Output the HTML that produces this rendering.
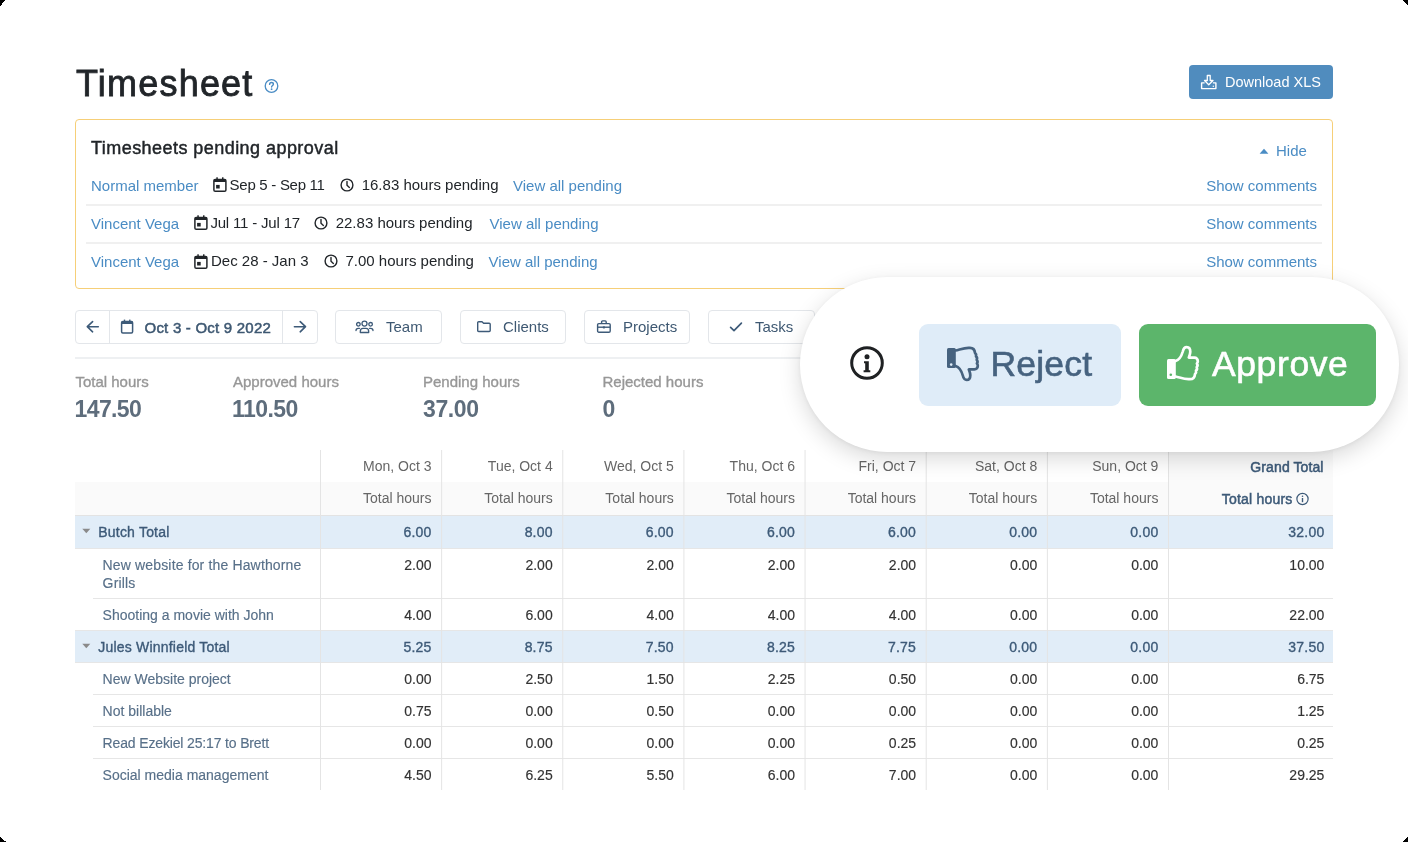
<!DOCTYPE html>
<html><head><meta charset="utf-8">
<style>
*{box-sizing:border-box;margin:0;padding:0}
html,body{width:1408px;height:842px;overflow:hidden;background:#000}
body{font-family:"Liberation Sans",sans-serif;position:relative}
#page{position:absolute;left:0;top:0;width:1408px;height:842px;background:#fff;overflow:hidden;will-change:transform}
.a{position:absolute;white-space:nowrap}
svg.a{overflow:visible}
</style></head><body>
<div id="page">
<div class="a" style="left:76px;top:65.93px;font-size:36px;line-height:36px;color:#212529;letter-spacing:1.2px;-webkit-text-stroke:0.8px #212529;">Timesheet</div>
<svg class="a" style="left:264px;top:78px" width="15" height="16" viewBox="0 0 15 16"><circle cx="7.5" cy="8" r="6.3" fill="none" stroke="#4a8cc4" stroke-width="1.3"/><path d="M5.6 6.4 C5.6 5.2 6.5 4.5 7.5 4.5 C8.6 4.5 9.4 5.2 9.4 6.2 C9.4 7.5 7.6 7.6 7.6 9" fill="none" stroke="#4a8cc4" stroke-width="1.4" stroke-linecap="round"/><circle cx="7.6" cy="11.2" r="0.9" fill="#4a8cc4"/></svg>
<div class="a" style="left:1189px;top:65px;width:144px;height:34px;background:#508cbe;border-radius:4px"></div>
<svg class="a" style="left:1200px;top:74px" width="18" height="16" viewBox="0 0 18 16"><path d="M7.3 1.5 H10.2 V6.5 H13 L8.75 10.8 L4.5 6.5 H7.3 Z" fill="none" stroke="#fff" stroke-width="1.3" stroke-linejoin="round"/><path d="M4.6 8.9 H1.6 V14.6 H15.9 V8.9 H12.9" fill="none" stroke="#fff" stroke-width="1.4" stroke-linejoin="round"/><circle cx="13.3" cy="12.3" r="0.7" fill="#fff"/></svg>
<div class="a" style="left:1225px;top:75.23px;font-size:14.5px;line-height:14.5px;color:#fff;">Download XLS</div>
<div class="a" style="left:75px;top:119px;width:1258px;height:170px;border:1px solid #f6cf78;border-radius:4px"></div>
<div class="a" style="left:91px;top:138.96px;font-size:18px;line-height:18px;color:#212529;letter-spacing:0.45px;-webkit-text-stroke:0.45px #212529;">Timesheets pending approval</div>
<svg class="a" style="left:1259px;top:147px" width="10" height="8" viewBox="0 0 10 8"><path d="M0.6 6.8 L5 1.8 L9.4 6.8Z" fill="#4a8cc4"/></svg>
<div class="a" style="left:1276px;top:143.30px;font-size:15px;line-height:15px;color:#4a8cc4;">Hide</div>
<div class="a" style="left:91px;top:177.80px;font-size:15px;line-height:15px;color:#4a8cc4;">Normal member</div>
<svg class="a" style="left:212.5px;top:177.2px" width="14" height="15" viewBox="0 0 14 15"><rect x="0.9" y="2.4" width="12" height="11.8" rx="1.3" fill="none" stroke="#212529" stroke-width="1.5"/><rect x="0.9" y="2.4" width="12" height="2.6" fill="#212529"/><rect x="3.3" y="0.3" width="1.5" height="3" fill="#212529"/><rect x="9" y="0.3" width="1.5" height="3" fill="#212529"/><rect x="3.1" y="7.9" width="3.6" height="3.6" fill="#212529"/></svg>
<div class="a" style="left:229.6px;top:176.90px;font-size:15px;line-height:15px;color:#212529;letter-spacing:-0.28px;">Sep 5 - Sep 11</div>
<svg class="a" style="left:340px;top:177.6px" width="14" height="14" viewBox="0 0 14 14"><circle cx="7" cy="7" r="5.9" fill="none" stroke="#212529" stroke-width="1.4"/><path d="M7 3.4 V7.2 L9.4 9.4" fill="none" stroke="#212529" stroke-width="1.4" stroke-linecap="round" stroke-linejoin="round"/></svg>
<div class="a" style="left:361.7px;top:176.90px;font-size:15px;line-height:15px;color:#212529;">16.83 hours pending</div>
<div class="a" style="left:513px;top:177.80px;font-size:15px;line-height:15px;color:#4a8cc4;">View all pending</div>
<div class="a" style="left:1117px;width:200px;text-align:right;top:177.90px;font-size:15px;line-height:15px;color:#4a8cc4;">Show comments</div>
<div class="a" style="left:91px;top:216.00px;font-size:15px;line-height:15px;color:#4a8cc4;">Vincent Vega</div>
<svg class="a" style="left:194.1px;top:215.4px" width="14" height="15" viewBox="0 0 14 15"><rect x="0.9" y="2.4" width="12" height="11.8" rx="1.3" fill="none" stroke="#212529" stroke-width="1.5"/><rect x="0.9" y="2.4" width="12" height="2.6" fill="#212529"/><rect x="3.3" y="0.3" width="1.5" height="3" fill="#212529"/><rect x="9" y="0.3" width="1.5" height="3" fill="#212529"/><rect x="3.1" y="7.9" width="3.6" height="3.6" fill="#212529"/></svg>
<div class="a" style="left:210.4px;top:215.10px;font-size:15px;line-height:15px;color:#212529;letter-spacing:-0.18px;">Jul 11 - Jul 17</div>
<svg class="a" style="left:314.4px;top:215.8px" width="14" height="14" viewBox="0 0 14 14"><circle cx="7" cy="7" r="5.9" fill="none" stroke="#212529" stroke-width="1.4"/><path d="M7 3.4 V7.2 L9.4 9.4" fill="none" stroke="#212529" stroke-width="1.4" stroke-linecap="round" stroke-linejoin="round"/></svg>
<div class="a" style="left:335.7px;top:215.10px;font-size:15px;line-height:15px;color:#212529;">22.83 hours pending</div>
<div class="a" style="left:489.5px;top:216.00px;font-size:15px;line-height:15px;color:#4a8cc4;">View all pending</div>
<div class="a" style="left:1117px;width:200px;text-align:right;top:216.10px;font-size:15px;line-height:15px;color:#4a8cc4;">Show comments</div>
<div class="a" style="left:91px;top:254.10px;font-size:15px;line-height:15px;color:#4a8cc4;">Vincent Vega</div>
<svg class="a" style="left:194.1px;top:253.49999999999997px" width="14" height="15" viewBox="0 0 14 15"><rect x="0.9" y="2.4" width="12" height="11.8" rx="1.3" fill="none" stroke="#212529" stroke-width="1.5"/><rect x="0.9" y="2.4" width="12" height="2.6" fill="#212529"/><rect x="3.3" y="0.3" width="1.5" height="3" fill="#212529"/><rect x="9" y="0.3" width="1.5" height="3" fill="#212529"/><rect x="3.1" y="7.9" width="3.6" height="3.6" fill="#212529"/></svg>
<div class="a" style="left:211px;top:253.20px;font-size:15px;line-height:15px;color:#212529;">Dec 28 - Jan 3</div>
<svg class="a" style="left:324px;top:253.89999999999998px" width="14" height="14" viewBox="0 0 14 14"><circle cx="7" cy="7" r="5.9" fill="none" stroke="#212529" stroke-width="1.4"/><path d="M7 3.4 V7.2 L9.4 9.4" fill="none" stroke="#212529" stroke-width="1.4" stroke-linecap="round" stroke-linejoin="round"/></svg>
<div class="a" style="left:345.5px;top:253.20px;font-size:15px;line-height:15px;color:#212529;">7.00 hours pending</div>
<div class="a" style="left:488.6px;top:254.10px;font-size:15px;line-height:15px;color:#4a8cc4;">View all pending</div>
<div class="a" style="left:1117px;width:200px;text-align:right;top:254.20px;font-size:15px;line-height:15px;color:#4a8cc4;">Show comments</div>
<div class="a" style="left:86px;top:204px;width:1236px;height:2px;background:#f0f0f0"></div>
<div class="a" style="left:86px;top:242px;width:1236px;height:2px;background:#f0f0f0"></div>
<div class="a" style="left:75px;top:310px;width:243px;height:34px;border:1px solid #e3e6ea;border-radius:4px"></div>
<div class="a" style="left:109px;top:311px;width:1px;height:32px;background:#e3e6ea"></div>
<div class="a" style="left:282px;top:311px;width:1px;height:32px;background:#e3e6ea"></div>
<svg class="a" style="left:85px;top:320px" width="15" height="14" viewBox="0 0 15 14"><path d="M13.3 6.7 H2.6 M7.6 1.6 L2.3 6.7 L7.6 11.8" fill="none" stroke="#3d5a78" stroke-width="1.6" stroke-linecap="round" stroke-linejoin="round"/></svg>
<svg class="a" style="left:292px;top:320px" width="15" height="14" viewBox="0 0 15 14"><path d="M2.4 6.7 H13.2 M8.2 1.6 L13.5 6.7 L8.2 11.8" fill="none" stroke="#3d5a78" stroke-width="1.6" stroke-linecap="round" stroke-linejoin="round"/></svg>
<svg class="a" style="left:120px;top:319px" width="14" height="15" viewBox="0 0 14 15"><rect x="1.6" y="2.6" width="11" height="11.4" rx="1.2" fill="none" stroke="#3d5a78" stroke-width="1.5"/><rect x="1.6" y="2.6" width="11" height="2.4" fill="#3d5a78"/><rect x="3.8" y="0.6" width="1.4" height="2.5" fill="#3d5a78"/><rect x="9.1" y="0.6" width="1.4" height="2.5" fill="#3d5a78"/></svg>
<div class="a" style="left:144.5px;top:319.90px;font-size:15px;line-height:15px;color:#3e5872;letter-spacing:0.22px;-webkit-text-stroke:0.5px #3e5872;">Oct 3 - Oct 9 2022</div>
<div class="a" style="left:335px;top:310px;width:107px;height:34px;border:1px solid #e3e6ea;border-radius:4px"></div>
<svg class="a" style="left:355px;top:320px" width="19" height="14" viewBox="0 0 19 14"><circle cx="9.5" cy="3.6" r="2.5" fill="none" stroke="#3d5a78" stroke-width="1.3"/><circle cx="3.4" cy="4.3" r="1.8" fill="none" stroke="#3d5a78" stroke-width="1.3"/><circle cx="15.6" cy="4.3" r="1.8" fill="none" stroke="#3d5a78" stroke-width="1.3"/><path d="M5.3 12.5 V11.4 C5.3 9.4 6.5 8.4 8 8.4 H11 C12.5 8.4 13.7 9.4 13.7 11.4 V12.5 Z" fill="none" stroke="#3d5a78" stroke-width="1.3" stroke-linejoin="round"/><path d="M1 10.5 C1 9 2 8.3 3.3 8.3 H4.5 M18 10.5 C18 9 17 8.3 15.7 8.3 H14.5" fill="none" stroke="#3d5a78" stroke-width="1.3" stroke-linecap="round"/></svg>
<div class="a" style="left:386px;top:319.20px;font-size:15px;line-height:15px;color:#3e5872;">Team</div>
<div class="a" style="left:460px;top:310px;width:106px;height:34px;border:1px solid #e3e6ea;border-radius:4px"></div>
<svg class="a" style="left:476px;top:320px" width="16" height="13" viewBox="0 0 16 13"><path d="M1.7 2.6 C1.7 2 2.1 1.7 2.7 1.7 H6 L7.6 3.3 H13.2 C13.8 3.3 14.2 3.7 14.2 4.3 V10.6 C14.2 11.2 13.8 11.5 13.2 11.5 H2.7 C2.1 11.5 1.7 11.2 1.7 10.6 Z" fill="none" stroke="#3d5a78" stroke-width="1.4" stroke-linejoin="round"/></svg>
<div class="a" style="left:503px;top:319.20px;font-size:15px;line-height:15px;color:#3e5872;">Clients</div>
<div class="a" style="left:584px;top:310px;width:106px;height:34px;border:1px solid #e3e6ea;border-radius:4px"></div>
<svg class="a" style="left:596px;top:319px" width="16" height="15" viewBox="0 0 16 15"><rect x="1.6" y="4.6" width="12.6" height="8.6" rx="1.2" fill="none" stroke="#3d5a78" stroke-width="1.4"/><path d="M5.6 4.6 V2.9 C5.6 2.3 6 1.9 6.6 1.9 H9.2 C9.8 1.9 10.2 2.3 10.2 2.9 V4.6" fill="none" stroke="#3d5a78" stroke-width="1.4"/><path d="M1.6 8.2 H14.2" stroke="#3d5a78" stroke-width="1.4"/><rect x="6.9" y="7.4" width="2" height="2" fill="#3d5a78"/></svg>
<div class="a" style="left:623px;top:319.20px;font-size:15px;line-height:15px;color:#3e5872;">Projects</div>
<div class="a" style="left:708px;top:310px;width:107px;height:34px;border:1px solid #e3e6ea;border-radius:4px"></div>
<svg class="a" style="left:729px;top:321px" width="14" height="12" viewBox="0 0 14 12"><path d="M1.6 6.3 L5 9.6 L12.4 2.2" fill="none" stroke="#3d5a78" stroke-width="1.7" stroke-linecap="round" stroke-linejoin="round"/></svg>
<div class="a" style="left:755px;top:319.20px;font-size:15px;line-height:15px;color:#3e5872;">Tasks</div>
<div class="a" style="left:75px;top:357px;width:1258px;height:2px;background:#eef0f2"></div>
<div class="a" style="left:75.4px;top:373.90px;font-size:15px;line-height:15px;color:#979797;-webkit-text-stroke:0.35px #979797;">Total hours</div>
<div class="a" style="left:74.6px;top:398.03px;font-size:23px;line-height:23px;color:#5e6d7c;font-weight:bold;letter-spacing:-0.65px;">147.50</div>
<div class="a" style="left:233px;top:373.90px;font-size:15px;line-height:15px;color:#979797;-webkit-text-stroke:0.35px #979797;">Approved hours</div>
<div class="a" style="left:232px;top:398.03px;font-size:23px;line-height:23px;color:#5e6d7c;font-weight:bold;letter-spacing:-0.55px;">110.50</div>
<div class="a" style="left:423px;top:373.90px;font-size:15px;line-height:15px;color:#979797;-webkit-text-stroke:0.35px #979797;">Pending hours</div>
<div class="a" style="left:423px;top:398.03px;font-size:23px;line-height:23px;color:#5e6d7c;font-weight:bold;letter-spacing:-0.37px;">37.00</div>
<div class="a" style="left:602.5px;top:373.90px;font-size:15px;line-height:15px;color:#979797;-webkit-text-stroke:0.35px #979797;">Rejected hours</div>
<div class="a" style="left:602.5px;top:398.03px;font-size:23px;line-height:23px;color:#5e6d7c;font-weight:bold;">0</div>
<div class="a" style="left:1168px;top:450px;width:165px;height:32px;background:#fafafa"></div>
<div class="a" style="left:75px;top:482px;width:1258px;height:33px;background:#fafafa"></div>
<div class="a" style="left:75px;top:515px;width:1258px;height:1px;background:#e3e3e3"></div>
<div class="a" style="left:75px;top:516px;width:1258px;height:32px;background:#e1edf8"></div>
<div class="a" style="left:75px;top:631px;width:1258px;height:32px;background:#e1edf8"></div>
<div class="a" style="left:75px;top:548px;width:1258px;height:1px;background:#e6e6e6"></div>
<div class="a" style="left:93px;top:598px;width:1240px;height:1px;background:#e6e6e6"></div>
<div class="a" style="left:75px;top:630px;width:1258px;height:1px;background:#e6e6e6"></div>
<div class="a" style="left:75px;top:662px;width:1258px;height:1px;background:#e6e6e6"></div>
<div class="a" style="left:93px;top:694px;width:1240px;height:1px;background:#e6e6e6"></div>
<div class="a" style="left:93px;top:726px;width:1240px;height:1px;background:#e6e6e6"></div>
<div class="a" style="left:93px;top:758px;width:1240px;height:1px;background:#e6e6e6"></div>
<svg class="a" style="left:0;top:450px" width="1408" height="340" viewBox="0 0 1408 340"><line x1="320.50" y1="0" x2="320.50" y2="340" stroke="#e4e4e4" stroke-width="1"/><line x1="441.64" y1="0" x2="441.64" y2="340" stroke="#e4e4e4" stroke-width="1"/><line x1="562.79" y1="0" x2="562.79" y2="340" stroke="#e4e4e4" stroke-width="1"/><line x1="683.93" y1="0" x2="683.93" y2="340" stroke="#e4e4e4" stroke-width="1"/><line x1="805.07" y1="0" x2="805.07" y2="340" stroke="#e4e4e4" stroke-width="1"/><line x1="926.21" y1="0" x2="926.21" y2="340" stroke="#e4e4e4" stroke-width="1"/><line x1="1047.36" y1="0" x2="1047.36" y2="340" stroke="#e4e4e4" stroke-width="1"/><line x1="1168.50" y1="0" x2="1168.50" y2="340" stroke="#e4e4e4" stroke-width="1"/></svg>
<div class="a" style="left:321.54px;width:110px;text-align:right;top:459.15px;font-size:14px;line-height:14px;color:#666666;">Mon, Oct 3</div>
<div class="a" style="left:321.54px;width:110px;text-align:right;top:490.85px;font-size:14px;line-height:14px;color:#666666;">Total hours</div>
<div class="a" style="left:442.69000000000005px;width:110px;text-align:right;top:459.15px;font-size:14px;line-height:14px;color:#666666;">Tue, Oct 4</div>
<div class="a" style="left:442.69000000000005px;width:110px;text-align:right;top:490.85px;font-size:14px;line-height:14px;color:#666666;">Total hours</div>
<div class="a" style="left:563.83px;width:110px;text-align:right;top:459.15px;font-size:14px;line-height:14px;color:#666666;">Wed, Oct 5</div>
<div class="a" style="left:563.83px;width:110px;text-align:right;top:490.85px;font-size:14px;line-height:14px;color:#666666;">Total hours</div>
<div class="a" style="left:684.97px;width:110px;text-align:right;top:459.15px;font-size:14px;line-height:14px;color:#666666;">Thu, Oct 6</div>
<div class="a" style="left:684.97px;width:110px;text-align:right;top:490.85px;font-size:14px;line-height:14px;color:#666666;">Total hours</div>
<div class="a" style="left:806.11px;width:110px;text-align:right;top:459.15px;font-size:14px;line-height:14px;color:#666666;">Fri, Oct 7</div>
<div class="a" style="left:806.11px;width:110px;text-align:right;top:490.85px;font-size:14px;line-height:14px;color:#666666;">Total hours</div>
<div class="a" style="left:927.26px;width:110px;text-align:right;top:459.15px;font-size:14px;line-height:14px;color:#666666;">Sat, Oct 8</div>
<div class="a" style="left:927.26px;width:110px;text-align:right;top:490.85px;font-size:14px;line-height:14px;color:#666666;">Total hours</div>
<div class="a" style="left:1048.4px;width:110px;text-align:right;top:459.15px;font-size:14px;line-height:14px;color:#666666;">Sun, Oct 9</div>
<div class="a" style="left:1048.4px;width:110px;text-align:right;top:490.85px;font-size:14px;line-height:14px;color:#666666;">Total hours</div>
<div class="a" style="left:1173.6px;width:150px;text-align:right;top:459.65px;font-size:14px;line-height:14px;color:#3d5a78;letter-spacing:0.1px;-webkit-text-stroke:0.5px #3d5a78;">Grand Total</div>
<div class="a" style="left:1142.5px;width:150px;text-align:right;top:492.15px;font-size:14px;line-height:14px;color:#3d5a78;letter-spacing:0.2px;-webkit-text-stroke:0.5px #3d5a78;">Total hours</div>
<svg class="a" style="left:1296px;top:492px" width="14" height="14" viewBox="0 0 14 14"><circle cx="6.5" cy="7" r="5.6" fill="none" stroke="#3d5a78" stroke-width="1.2"/><rect x="5.8" y="6" width="1.4" height="4.2" fill="#3d5a78"/><circle cx="6.5" cy="4.3" r="0.8" fill="#3d5a78"/></svg>
<svg class="a" style="left:82px;top:528px" width="9" height="6" viewBox="0 0 9 6"><path d="M0.3 0.8 H8.3 L4.3 5.2 Z" fill="#8a8a8a"/></svg>
<div class="a" style="left:98.3px;top:525.15px;font-size:14px;line-height:14px;color:#3d5a78;letter-spacing:0.2px;-webkit-text-stroke:0.35px #3d5a78;">Butch Total</div>
<div class="a" style="left:331.54px;width:100px;text-align:right;top:525.15px;font-size:14px;line-height:14px;color:#3d5a78;letter-spacing:0.2px;-webkit-text-stroke:0.35px #3d5a78;">6.00</div>
<div class="a" style="left:452.69000000000005px;width:100px;text-align:right;top:525.15px;font-size:14px;line-height:14px;color:#3d5a78;letter-spacing:0.2px;-webkit-text-stroke:0.35px #3d5a78;">8.00</div>
<div class="a" style="left:573.83px;width:100px;text-align:right;top:525.15px;font-size:14px;line-height:14px;color:#3d5a78;letter-spacing:0.2px;-webkit-text-stroke:0.35px #3d5a78;">6.00</div>
<div class="a" style="left:694.97px;width:100px;text-align:right;top:525.15px;font-size:14px;line-height:14px;color:#3d5a78;letter-spacing:0.2px;-webkit-text-stroke:0.35px #3d5a78;">6.00</div>
<div class="a" style="left:816.11px;width:100px;text-align:right;top:525.15px;font-size:14px;line-height:14px;color:#3d5a78;letter-spacing:0.2px;-webkit-text-stroke:0.35px #3d5a78;">6.00</div>
<div class="a" style="left:937.26px;width:100px;text-align:right;top:525.15px;font-size:14px;line-height:14px;color:#3d5a78;letter-spacing:0.2px;-webkit-text-stroke:0.35px #3d5a78;">0.00</div>
<div class="a" style="left:1058.4px;width:100px;text-align:right;top:525.15px;font-size:14px;line-height:14px;color:#3d5a78;letter-spacing:0.2px;-webkit-text-stroke:0.35px #3d5a78;">0.00</div>
<div class="a" style="left:1224.4px;width:100px;text-align:right;top:525.15px;font-size:14px;line-height:14px;color:#3d5a78;letter-spacing:0.2px;-webkit-text-stroke:0.35px #3d5a78;">32.00</div>
<div class="a" style="left:102.6px;top:557.55px;font-size:14px;line-height:14px;color:#587089;letter-spacing:0.15px;-webkit-text-stroke:0.15px #587089;">New website for the Hawthorne</div>
<div class="a" style="left:102.6px;top:575.55px;font-size:14px;line-height:14px;color:#587089;letter-spacing:0.15px;-webkit-text-stroke:0.15px #587089;">Grills</div>
<div class="a" style="left:331.54px;width:100px;text-align:right;top:557.55px;font-size:14px;line-height:14px;color:#333333;-webkit-text-stroke:0.15px #333333;">2.00</div>
<div class="a" style="left:452.69000000000005px;width:100px;text-align:right;top:557.55px;font-size:14px;line-height:14px;color:#333333;-webkit-text-stroke:0.15px #333333;">2.00</div>
<div class="a" style="left:573.83px;width:100px;text-align:right;top:557.55px;font-size:14px;line-height:14px;color:#333333;-webkit-text-stroke:0.15px #333333;">2.00</div>
<div class="a" style="left:694.97px;width:100px;text-align:right;top:557.55px;font-size:14px;line-height:14px;color:#333333;-webkit-text-stroke:0.15px #333333;">2.00</div>
<div class="a" style="left:816.11px;width:100px;text-align:right;top:557.55px;font-size:14px;line-height:14px;color:#333333;-webkit-text-stroke:0.15px #333333;">2.00</div>
<div class="a" style="left:937.26px;width:100px;text-align:right;top:557.55px;font-size:14px;line-height:14px;color:#333333;-webkit-text-stroke:0.15px #333333;">0.00</div>
<div class="a" style="left:1058.4px;width:100px;text-align:right;top:557.55px;font-size:14px;line-height:14px;color:#333333;-webkit-text-stroke:0.15px #333333;">0.00</div>
<div class="a" style="left:1224.4px;width:100px;text-align:right;top:557.55px;font-size:14px;line-height:14px;color:#333333;-webkit-text-stroke:0.15px #333333;">10.00</div>
<div class="a" style="left:102.6px;top:607.55px;font-size:14px;line-height:14px;color:#587089;-webkit-text-stroke:0.15px #587089;">Shooting a movie with John</div>
<div class="a" style="left:331.54px;width:100px;text-align:right;top:607.55px;font-size:14px;line-height:14px;color:#333333;-webkit-text-stroke:0.15px #333333;">4.00</div>
<div class="a" style="left:452.69000000000005px;width:100px;text-align:right;top:607.55px;font-size:14px;line-height:14px;color:#333333;-webkit-text-stroke:0.15px #333333;">6.00</div>
<div class="a" style="left:573.83px;width:100px;text-align:right;top:607.55px;font-size:14px;line-height:14px;color:#333333;-webkit-text-stroke:0.15px #333333;">4.00</div>
<div class="a" style="left:694.97px;width:100px;text-align:right;top:607.55px;font-size:14px;line-height:14px;color:#333333;-webkit-text-stroke:0.15px #333333;">4.00</div>
<div class="a" style="left:816.11px;width:100px;text-align:right;top:607.55px;font-size:14px;line-height:14px;color:#333333;-webkit-text-stroke:0.15px #333333;">4.00</div>
<div class="a" style="left:937.26px;width:100px;text-align:right;top:607.55px;font-size:14px;line-height:14px;color:#333333;-webkit-text-stroke:0.15px #333333;">0.00</div>
<div class="a" style="left:1058.4px;width:100px;text-align:right;top:607.55px;font-size:14px;line-height:14px;color:#333333;-webkit-text-stroke:0.15px #333333;">0.00</div>
<div class="a" style="left:1224.4px;width:100px;text-align:right;top:607.55px;font-size:14px;line-height:14px;color:#333333;-webkit-text-stroke:0.15px #333333;">22.00</div>
<svg class="a" style="left:82px;top:643px" width="9" height="6" viewBox="0 0 9 6"><path d="M0.3 0.8 H8.3 L4.3 5.2 Z" fill="#8a8a8a"/></svg>
<div class="a" style="left:98.3px;top:640.15px;font-size:14px;line-height:14px;color:#3d5a78;letter-spacing:0.2px;-webkit-text-stroke:0.35px #3d5a78;">Jules Winnfield Total</div>
<div class="a" style="left:331.54px;width:100px;text-align:right;top:640.15px;font-size:14px;line-height:14px;color:#3d5a78;letter-spacing:0.2px;-webkit-text-stroke:0.35px #3d5a78;">5.25</div>
<div class="a" style="left:452.69000000000005px;width:100px;text-align:right;top:640.15px;font-size:14px;line-height:14px;color:#3d5a78;letter-spacing:0.2px;-webkit-text-stroke:0.35px #3d5a78;">8.75</div>
<div class="a" style="left:573.83px;width:100px;text-align:right;top:640.15px;font-size:14px;line-height:14px;color:#3d5a78;letter-spacing:0.2px;-webkit-text-stroke:0.35px #3d5a78;">7.50</div>
<div class="a" style="left:694.97px;width:100px;text-align:right;top:640.15px;font-size:14px;line-height:14px;color:#3d5a78;letter-spacing:0.2px;-webkit-text-stroke:0.35px #3d5a78;">8.25</div>
<div class="a" style="left:816.11px;width:100px;text-align:right;top:640.15px;font-size:14px;line-height:14px;color:#3d5a78;letter-spacing:0.2px;-webkit-text-stroke:0.35px #3d5a78;">7.75</div>
<div class="a" style="left:937.26px;width:100px;text-align:right;top:640.15px;font-size:14px;line-height:14px;color:#3d5a78;letter-spacing:0.2px;-webkit-text-stroke:0.35px #3d5a78;">0.00</div>
<div class="a" style="left:1058.4px;width:100px;text-align:right;top:640.15px;font-size:14px;line-height:14px;color:#3d5a78;letter-spacing:0.2px;-webkit-text-stroke:0.35px #3d5a78;">0.00</div>
<div class="a" style="left:1224.4px;width:100px;text-align:right;top:640.15px;font-size:14px;line-height:14px;color:#3d5a78;letter-spacing:0.2px;-webkit-text-stroke:0.35px #3d5a78;">37.50</div>
<div class="a" style="left:102.6px;top:671.55px;font-size:14px;line-height:14px;color:#587089;-webkit-text-stroke:0.15px #587089;">New Website project</div>
<div class="a" style="left:331.54px;width:100px;text-align:right;top:671.55px;font-size:14px;line-height:14px;color:#333333;-webkit-text-stroke:0.15px #333333;">0.00</div>
<div class="a" style="left:452.69000000000005px;width:100px;text-align:right;top:671.55px;font-size:14px;line-height:14px;color:#333333;-webkit-text-stroke:0.15px #333333;">2.50</div>
<div class="a" style="left:573.83px;width:100px;text-align:right;top:671.55px;font-size:14px;line-height:14px;color:#333333;-webkit-text-stroke:0.15px #333333;">1.50</div>
<div class="a" style="left:694.97px;width:100px;text-align:right;top:671.55px;font-size:14px;line-height:14px;color:#333333;-webkit-text-stroke:0.15px #333333;">2.25</div>
<div class="a" style="left:816.11px;width:100px;text-align:right;top:671.55px;font-size:14px;line-height:14px;color:#333333;-webkit-text-stroke:0.15px #333333;">0.50</div>
<div class="a" style="left:937.26px;width:100px;text-align:right;top:671.55px;font-size:14px;line-height:14px;color:#333333;-webkit-text-stroke:0.15px #333333;">0.00</div>
<div class="a" style="left:1058.4px;width:100px;text-align:right;top:671.55px;font-size:14px;line-height:14px;color:#333333;-webkit-text-stroke:0.15px #333333;">0.00</div>
<div class="a" style="left:1224.4px;width:100px;text-align:right;top:671.55px;font-size:14px;line-height:14px;color:#333333;-webkit-text-stroke:0.15px #333333;">6.75</div>
<div class="a" style="left:102.6px;top:703.55px;font-size:14px;line-height:14px;color:#587089;-webkit-text-stroke:0.15px #587089;">Not billable</div>
<div class="a" style="left:331.54px;width:100px;text-align:right;top:703.55px;font-size:14px;line-height:14px;color:#333333;-webkit-text-stroke:0.15px #333333;">0.75</div>
<div class="a" style="left:452.69000000000005px;width:100px;text-align:right;top:703.55px;font-size:14px;line-height:14px;color:#333333;-webkit-text-stroke:0.15px #333333;">0.00</div>
<div class="a" style="left:573.83px;width:100px;text-align:right;top:703.55px;font-size:14px;line-height:14px;color:#333333;-webkit-text-stroke:0.15px #333333;">0.50</div>
<div class="a" style="left:694.97px;width:100px;text-align:right;top:703.55px;font-size:14px;line-height:14px;color:#333333;-webkit-text-stroke:0.15px #333333;">0.00</div>
<div class="a" style="left:816.11px;width:100px;text-align:right;top:703.55px;font-size:14px;line-height:14px;color:#333333;-webkit-text-stroke:0.15px #333333;">0.00</div>
<div class="a" style="left:937.26px;width:100px;text-align:right;top:703.55px;font-size:14px;line-height:14px;color:#333333;-webkit-text-stroke:0.15px #333333;">0.00</div>
<div class="a" style="left:1058.4px;width:100px;text-align:right;top:703.55px;font-size:14px;line-height:14px;color:#333333;-webkit-text-stroke:0.15px #333333;">0.00</div>
<div class="a" style="left:1224.4px;width:100px;text-align:right;top:703.55px;font-size:14px;line-height:14px;color:#333333;-webkit-text-stroke:0.15px #333333;">1.25</div>
<div class="a" style="left:102.6px;top:735.55px;font-size:14px;line-height:14px;color:#587089;letter-spacing:-0.15px;-webkit-text-stroke:0.15px #587089;">Read Ezekiel 25:17 to Brett</div>
<div class="a" style="left:331.54px;width:100px;text-align:right;top:735.55px;font-size:14px;line-height:14px;color:#333333;-webkit-text-stroke:0.15px #333333;">0.00</div>
<div class="a" style="left:452.69000000000005px;width:100px;text-align:right;top:735.55px;font-size:14px;line-height:14px;color:#333333;-webkit-text-stroke:0.15px #333333;">0.00</div>
<div class="a" style="left:573.83px;width:100px;text-align:right;top:735.55px;font-size:14px;line-height:14px;color:#333333;-webkit-text-stroke:0.15px #333333;">0.00</div>
<div class="a" style="left:694.97px;width:100px;text-align:right;top:735.55px;font-size:14px;line-height:14px;color:#333333;-webkit-text-stroke:0.15px #333333;">0.00</div>
<div class="a" style="left:816.11px;width:100px;text-align:right;top:735.55px;font-size:14px;line-height:14px;color:#333333;-webkit-text-stroke:0.15px #333333;">0.25</div>
<div class="a" style="left:937.26px;width:100px;text-align:right;top:735.55px;font-size:14px;line-height:14px;color:#333333;-webkit-text-stroke:0.15px #333333;">0.00</div>
<div class="a" style="left:1058.4px;width:100px;text-align:right;top:735.55px;font-size:14px;line-height:14px;color:#333333;-webkit-text-stroke:0.15px #333333;">0.00</div>
<div class="a" style="left:1224.4px;width:100px;text-align:right;top:735.55px;font-size:14px;line-height:14px;color:#333333;-webkit-text-stroke:0.15px #333333;">0.25</div>
<div class="a" style="left:102.6px;top:767.55px;font-size:14px;line-height:14px;color:#587089;-webkit-text-stroke:0.15px #587089;">Social media management</div>
<div class="a" style="left:331.54px;width:100px;text-align:right;top:767.55px;font-size:14px;line-height:14px;color:#333333;-webkit-text-stroke:0.15px #333333;">4.50</div>
<div class="a" style="left:452.69000000000005px;width:100px;text-align:right;top:767.55px;font-size:14px;line-height:14px;color:#333333;-webkit-text-stroke:0.15px #333333;">6.25</div>
<div class="a" style="left:573.83px;width:100px;text-align:right;top:767.55px;font-size:14px;line-height:14px;color:#333333;-webkit-text-stroke:0.15px #333333;">5.50</div>
<div class="a" style="left:694.97px;width:100px;text-align:right;top:767.55px;font-size:14px;line-height:14px;color:#333333;-webkit-text-stroke:0.15px #333333;">6.00</div>
<div class="a" style="left:816.11px;width:100px;text-align:right;top:767.55px;font-size:14px;line-height:14px;color:#333333;-webkit-text-stroke:0.15px #333333;">7.00</div>
<div class="a" style="left:937.26px;width:100px;text-align:right;top:767.55px;font-size:14px;line-height:14px;color:#333333;-webkit-text-stroke:0.15px #333333;">0.00</div>
<div class="a" style="left:1058.4px;width:100px;text-align:right;top:767.55px;font-size:14px;line-height:14px;color:#333333;-webkit-text-stroke:0.15px #333333;">0.00</div>
<div class="a" style="left:1224.4px;width:100px;text-align:right;top:767.55px;font-size:14px;line-height:14px;color:#333333;-webkit-text-stroke:0.15px #333333;">29.25</div>
<div class="a" style="left:799.5px;top:277.3px;width:599px;height:174.5px;border-radius:87.25px;background:#fff;box-shadow:0 7px 22px rgba(0,0,0,0.15),0 1px 4px rgba(0,0,0,0.05)"></div>
<svg class="a" style="left:849px;top:345px" width="36" height="36" viewBox="0 0 36 36"><circle cx="18" cy="18" r="15.3" fill="none" stroke="#1f2123" stroke-width="3"/><circle cx="18" cy="11.8" r="2.5" fill="#1f2123"/><path d="M15 16.2 H19.8 V25.2 H21.3 V27.2 H14.6 V25.2 H16.2 V18.2 H15 Z" fill="#1f2123"/></svg>
<div class="a" style="left:919px;top:323.5px;width:202px;height:82px;background:#dfecf8;border-radius:9px"></div>
<div class="a" style="left:1139px;top:323.5px;width:236.5px;height:82px;background:#5cb56b;border-radius:9px"></div>
<div class="a" style="left:990.5px;top:346.65px;font-size:35.5px;line-height:35.5px;color:#46627f;letter-spacing:0.2px;-webkit-text-stroke:0.6px #46627f;">Reject</div>
<div class="a" style="left:1212px;top:346.65px;font-size:35.5px;line-height:35.5px;color:#fff;letter-spacing:0.6px;-webkit-text-stroke:0.6px #fff;">Approve</div>
<svg class="a" style="left:946px;top:345px" width="35" height="37" viewBox="0 0 35 37"><g transform="translate(0,37) scale(1,-1)"><rect x="1" y="14" width="8.8" height="20" rx="1.5" fill="#46627f"/><path d="M9.6 16 C13 15 15.5 11 16.8 6.5 C17.5 3.5 18.5 2.1 20.7 2.1 C23 2.1 24.3 4 24.3 6.8 C24.3 8.8 23.6 10.5 22.8 12.6 H28.4 C30.4 12.6 31.8 14.2 31.8 16.2 C31.8 17.3 31.3 18 30.9 18.6 C31.6 19.5 31.6 21.2 30.7 22.2 C31.2 23.3 31 24.8 30 25.6 C30.3 26.8 30 28.3 29 29.1 C28.7 32.5 27 34.2 24 34.2 H22.5 C17.5 34.2 13.5 32.3 9.6 31.5" fill="none" stroke="#46627f" stroke-width="2.7" stroke-linejoin="round" stroke-linecap="round"/></g><circle cx="5.2" cy="19.6" r="1.3" fill="#dfecf8"/></svg>
<svg class="a" style="left:1166px;top:345px" width="35" height="37" viewBox="0 0 35 37"><rect x="1" y="14" width="8.8" height="20" rx="1.5" fill="#fff"/><circle cx="4.8" cy="29.8" r="1.3" fill="#5cb56b"/><path d="M9.6 16 C13 15 15.5 11 16.8 6.5 C17.5 3.5 18.5 2.1 20.7 2.1 C23 2.1 24.3 4 24.3 6.8 C24.3 8.8 23.6 10.5 22.8 12.6 H28.4 C30.4 12.6 31.8 14.2 31.8 16.2 C31.8 17.3 31.3 18 30.9 18.6 C31.6 19.5 31.6 21.2 30.7 22.2 C31.2 23.3 31 24.8 30 25.6 C30.3 26.8 30 28.3 29 29.1 C28.7 32.5 27 34.2 24 34.2 H22.5 C17.5 34.2 13.5 32.3 9.6 31.5" fill="none" stroke="#fff" stroke-width="2.7" stroke-linejoin="round" stroke-linecap="round"/></svg>
<svg class="a" style="left:0;top:0" width="1408" height="842" shape-rendering="crispEdges"><polygon points="0,0 5.6,0 0,6.2" fill="#000"/><polygon points="1408,0 1402,0 1408,5.6" fill="#000"/><polygon points="0,842 0,836.6 6.2,842" fill="#000"/><polygon points="1408,842 1408,836.4 1402.2,842" fill="#000"/></svg></div>
</body></html>
